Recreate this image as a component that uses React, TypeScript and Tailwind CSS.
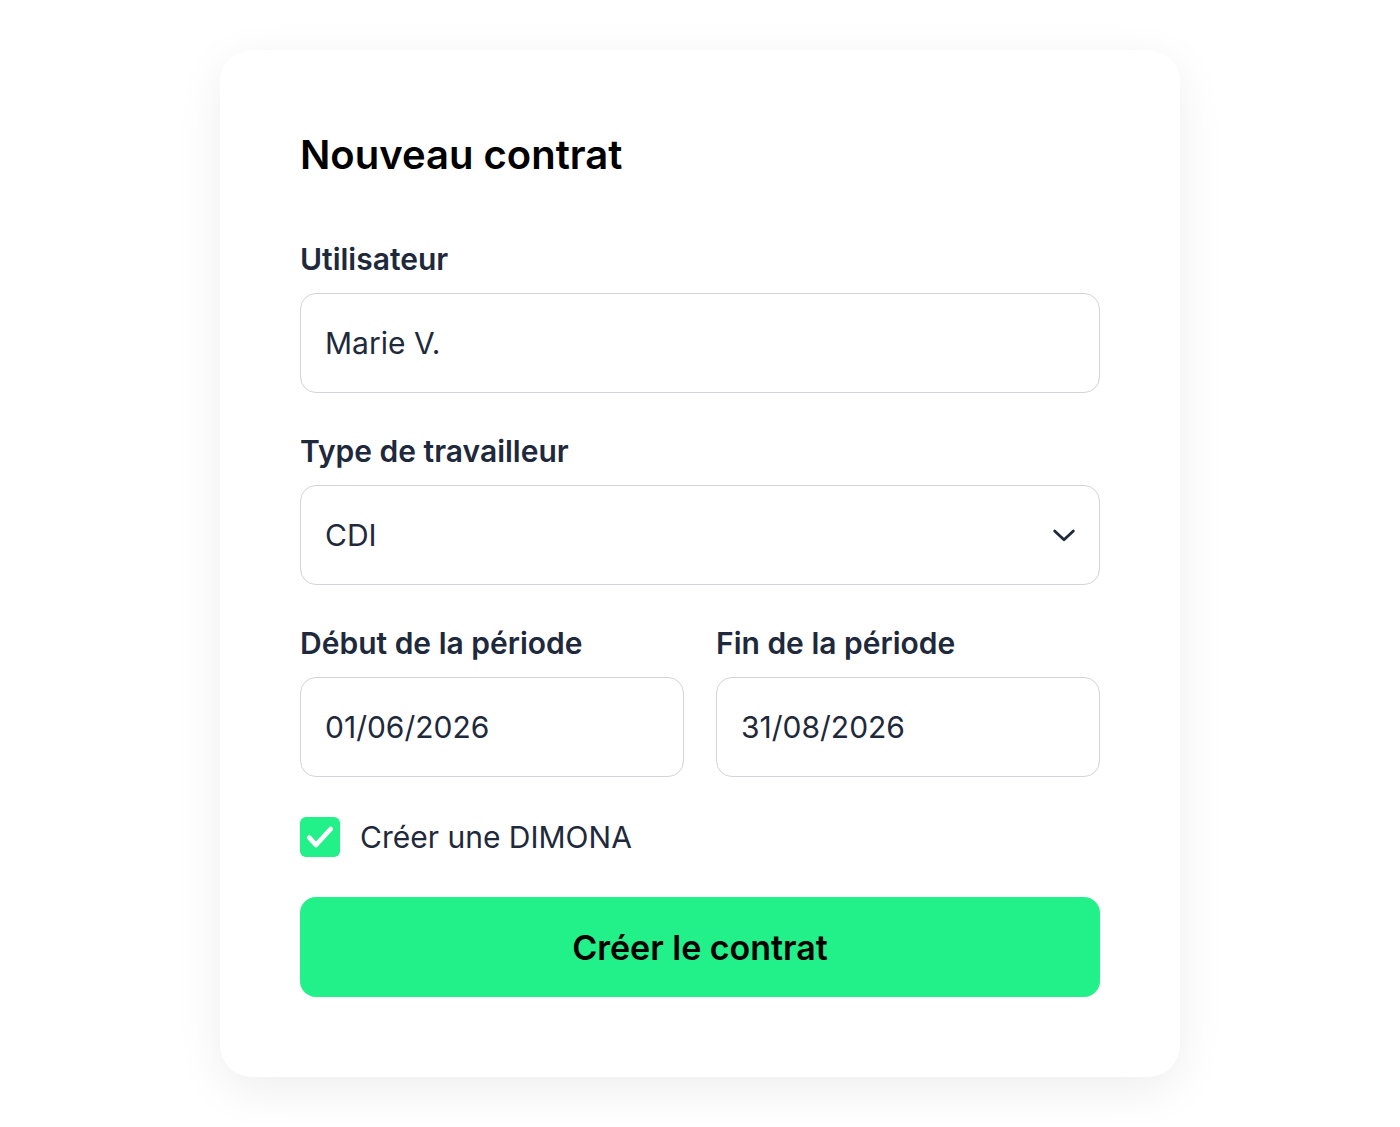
import React, { useState } from 'react'

const font = { fontFamily: 'Inter, "Noto Sans", sans-serif' }

const Field = ({ label, value, select }: { label: string; value: string; select?: boolean }) => (
    <div className="flex flex-col">
        <label className="text-[30px] leading-[36px] font-semibold text-[#1e293b] mb-4">{label}</label>
        <div className="h-[100px] rounded-2xl border border-[#d4d4d8] flex items-center justify-between pl-6 pr-[21px]">
            <span className="text-[30px] text-[#1e293b]">{value}</span>
            {select && (
                <svg width="28" height="28" viewBox="0 0 24 24" fill="none" stroke="#1e293b" strokeWidth="2.4" strokeLinecap="round" strokeLinejoin="round">
                    <path d="M4 8.5l8 7.5 8-7.5" />
                </svg>
            )}
        </div>
    </div>
)

const App = () => {
    const [dimona, setDimona] = useState(true)

    return (
        <div className="w-full min-h-[1127px] bg-white flex justify-center pt-[50px] pb-[50px]" style={font}>
            <div className="w-[960px] h-[1027px] bg-white rounded-[32px] shadow-[0_12px_48px_rgba(0,0,0,0.07)] px-20 pt-20 pb-20 flex flex-col">
                <h1 className="text-[40px] leading-[50px] font-semibold text-black">Nouveau contrat</h1>

                <div className="mt-[61px] flex flex-col gap-10">
                    <Field label="Utilisateur" value="Marie V." />
                    <Field label="Type de travailleur" value="CDI" select />
                    <div className="grid grid-cols-2 gap-8">
                        <Field label="Début de la période" value="01/06/2026" />
                        <Field label="Fin de la période" value="31/08/2026" />
                    </div>

                    <button className="h-10 flex items-center gap-5 text-left" onClick={() => setDimona(!dimona)}>
                        <span className="w-10 h-10 rounded-md bg-[#22f088] flex items-center justify-center">
                            {dimona && (
                                <svg width="32" height="32" viewBox="0 0 24 24" fill="none" stroke="white" strokeWidth="3.6" strokeLinecap="round" strokeLinejoin="round">
                                    <path d="M4 12.5l5 5.5 11-12" />
                                </svg>
                            )}
                        </span>
                        <span className="text-[30px] leading-10 text-[#1e293b]">Créer une DIMONA</span>
                    </button>
                </div>

                <button className="mt-10 h-[100px] w-full rounded-2xl bg-[#22f088] text-black text-[34px] font-semibold">
                    Créer le contrat
                </button>
            </div>
        </div>
    )
}

export default App
